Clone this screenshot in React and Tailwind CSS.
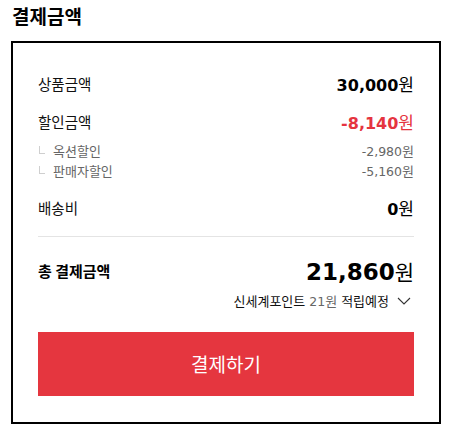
import React from "react";

const kr = { fontFamily: '"Noto Sans CJK KR", "Noto Sans", sans-serif' };
const num = { fontFamily: '"DejaVu Sans", "Noto Sans CJK KR", sans-serif' };

const Won = ({ value, className = "", wonClass = "" }) => (
  <span className={`flex items-baseline ${className}`}>
    <span style={num}>{value}</span>
    <span style={kr} className={wonClass}>
      원
    </span>
  </span>
);

const SubRow = ({ label, value }) => (
  <div className="flex h-5 items-center justify-between text-[#666]">
    <div className="flex items-center">
      <span className="mb-[2px] ml-[1px] mr-[8px] h-[8px] w-[6px] border-b border-l border-[#cfcfcf]" />
      <span style={kr} className="text-[13px] leading-5">
        {label}
      </span>
    </div>
    <Won value={value} className="text-[12.5px] leading-5" wonClass="text-[13px]" />
  </div>
);

export default function App() {
  return (
    <div className="bg-white pt-[2px]" style={kr}>
      <h2 className="h-7 pl-[12px] text-[19px] font-bold leading-7 text-black">결제금액</h2>

      <div className="ml-[11px] mt-[11px] w-[430px] border-2 border-black px-[25px] pb-[26px] pt-[29px]">
        {/* 상품금액 */}
        <div className="flex h-6 items-center justify-between">
          <span className="text-[14.5px] text-[#111]">상품금액</span>
          <Won value="30,000" className="text-[16px] font-bold text-black" wonClass="font-normal text-[17px]" />
        </div>

        {/* 할인금액 */}
        <div className="mt-[14px] flex h-6 items-center justify-between">
          <span className="text-[14.5px] text-[#111]">할인금액</span>
          <Won value="-8,140" className="text-[16px] font-bold text-[#e5343f]" wonClass="font-normal text-[17px]" />
        </div>

        <div className="mt-[7px]">
          <SubRow label="옥션할인" value="-2,980" />
          <SubRow label="판매자할인" value="-5,160" />
        </div>

        {/* 배송비 */}
        <div className="mt-[15px] flex h-6 items-center justify-between">
          <span className="text-[14.5px] text-[#111]">배송비</span>
          <Won value="0" className="text-[16px] font-bold text-black" wonClass="font-normal text-[17px]" />
        </div>

        <div className="mt-[16px] h-px bg-[#e4e4e4]" />

        {/* 총 결제금액 */}
        <div className="mt-[18px] flex h-8 items-center justify-between">
          <span className="text-[15px] font-bold text-black">총 결제금액</span>
          <Won value="21,860" className="text-[23px] font-bold leading-8 text-black" wonClass="font-normal text-[21px]" />
        </div>

        <div className="mt-1 flex h-5 items-center justify-end text-[13px] leading-5 text-[#111]">
          <span>신세계포인트</span>
          <span className="ml-[4px] text-[#666]">
            <span style={num} className="text-[12.5px]">21</span>원
          </span>
          <span className="ml-[4px]">적립예정</span>
          <svg className="ml-[8px] mr-[3px]" width="14" height="8" viewBox="0 0 14 8" fill="none">
            <path d="M1 1l6 6 6-6" stroke="#333" strokeWidth="1.1" />
          </svg>
        </div>

        <button className="mt-[21px] flex h-16 w-full items-center justify-center bg-[#e5363f] text-[19px] text-white">
          결제하기
        </button>
      </div>
    </div>
  );
}
